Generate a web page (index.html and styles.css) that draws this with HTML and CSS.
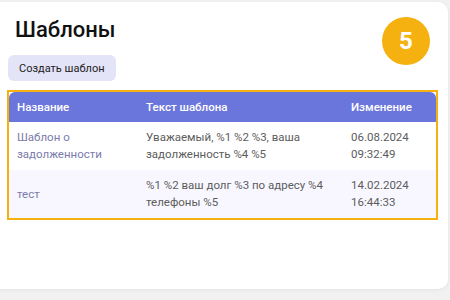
FILE: index.html
```html
<!DOCTYPE html>
<html lang="ru">
<head>
  <meta charset="UTF-8">
  <title>Шаблоны</title>
  <link rel="stylesheet" href="styles.css">
</head>
<body>
  <div class="card">
    <div class="top">
      <div class="top-left">
        <h1>Шаблоны</h1>
        <button class="btn">Создать шаблон</button>
      </div>
      <div class="badge">5</div>
    </div>

    <div class="highlight">
      <table class="templates">
        <thead>
          <tr>
            <th class="col-name">Название</th>
            <th class="col-text">Текст шаблона</th>
            <th class="col-date">Изменение</th>
          </tr>
        </thead>
        <tbody>
          <tr>
            <td class="name">Шаблон о задолженности</td>
            <td>Уважаемый, %1 %2 %3, ваша задолженность %4 %5</td>
            <td>06.08.2024<br>09:32:49</td>
          </tr>
          <tr class="alt">
            <td class="name">тест</td>
            <td>%1 %2 ваш долг %3 по адресу %4 телефоны %5</td>
            <td>14.02.2024<br>16:44:33</td>
          </tr>
        </tbody>
      </table>
    </div>
  </div>
</body>
</html>
```

FILE: styles.css
```css
* {
  margin: 0;
  padding: 0;
  box-sizing: border-box;
}

body {
  width: 450px;
  height: 300px;
  background: #f1f1f1;
  font-family: 'Roboto', 'Noto Sans', sans-serif;
  color: #333;
  padding: 2px 2px 0 0;
}

.card {
  background: #fff;
  height: 287px;
  border-radius: 0 10px 10px 0;
  box-shadow: 0 1px 4px rgba(0, 0, 0, 0.06);
  padding: 13px 10px 0 7px;
}

.top {
  display: flex;
  justify-content: space-between;
  align-items: flex-start;
  margin-bottom: 9px;
}

.top h1 {
  font-size: 22px;
  font-weight: 500;
  color: #111;
  line-height: 29px;
  margin-left: 8px;
  margin-bottom: 11px;
}

.btn {
  display: block;
  background: #e4e4f8;
  border: none;
  border-radius: 6px;
  font-family: inherit;
  font-size: 11px;
  color: #222;
  padding: 0 11px;
  height: 26px;
  margin-left: 1px;
}

.badge {
  width: 48px;
  height: 48px;
  border-radius: 50%;
  background: #f5b10f;
  color: #fff;
  font-size: 24px;
  font-weight: 700;
  display: flex;
  align-items: center;
  justify-content: center;
  margin-top: 2px;
  margin-right: 8px;
}

.highlight {
  border: 2px solid #f5b10f;
  width: 431px;
}

.templates {
  width: 100%;
  border-collapse: separate;
  border-spacing: 0;
  font-size: 11.5px;
}

.templates th {
  background: #6b76dc;
  color: #fff;
  font-weight: 500;
  text-align: left;
  height: 30px;
  padding: 0 8px;
}

.templates th:first-child {
  border-top-left-radius: 6px;
}

.templates th:last-child {
  border-top-right-radius: 6px;
}

.templates td {
  color: #5c5c5c;
  line-height: 17px;
  padding: 7px 8px;
  height: 48px;
  vertical-align: middle;
}

.templates td.name {
  color: #7c7bab;
}

.templates tr.alt td {
  background: #f8f7ff;
}

.col-name {
  width: 129px;
}

.col-text {
  width: 205px;
}
```
